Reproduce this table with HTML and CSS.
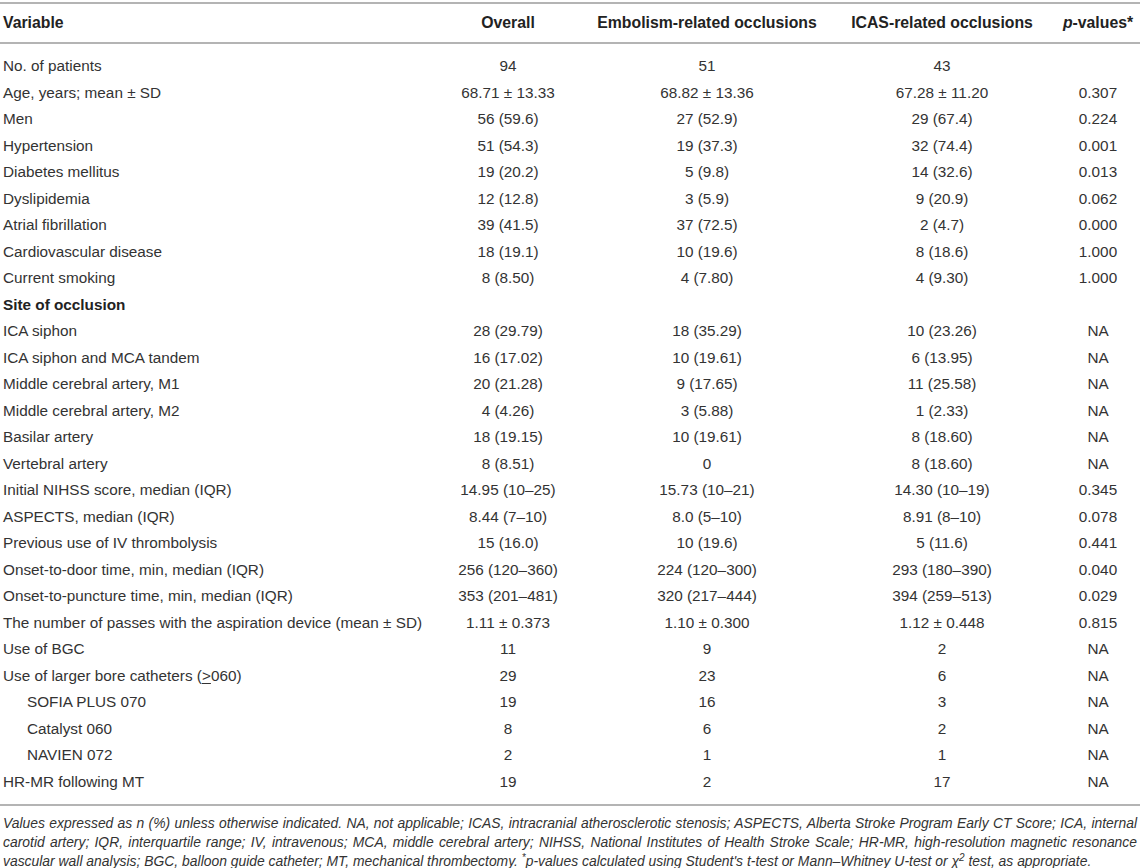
FILE: index.html
```html
<!DOCTYPE html>
<html lang="en">
<head>
<meta charset="utf-8">
<title>Table</title>
<link rel="stylesheet" href="styles.css">
</head>
<body>
<div class="wrap">
<table class="tbl">
  <colgroup>
    <col class="c-var"><col class="c-all"><col class="c-emb"><col class="c-icas"><col class="c-p">
  </colgroup>
  <thead>
    <tr><th class="left">Variable</th><th>Overall</th><th>Embolism-related occlusions</th><th>ICAS-related occlusions</th><th><i>p</i>-values*</th></tr>
  </thead>
  <tbody>
    <tr class="first"><td>No. of patients</td><td>94</td><td>51</td><td>43</td><td></td></tr>
    <tr><td>Age, years; mean ± SD</td><td>68.71 ± 13.33</td><td>68.82 ± 13.36</td><td>67.28 ± 11.20</td><td>0.307</td></tr>
    <tr><td>Men</td><td>56 (59.6)</td><td>27 (52.9)</td><td>29 (67.4)</td><td>0.224</td></tr>
    <tr><td>Hypertension</td><td>51 (54.3)</td><td>19 (37.3)</td><td>32 (74.4)</td><td>0.001</td></tr>
    <tr><td>Diabetes mellitus</td><td>19 (20.2)</td><td>5 (9.8)</td><td>14 (32.6)</td><td>0.013</td></tr>
    <tr><td>Dyslipidemia</td><td>12 (12.8)</td><td>3 (5.9)</td><td>9 (20.9)</td><td>0.062</td></tr>
    <tr><td>Atrial fibrillation</td><td>39 (41.5)</td><td>37 (72.5)</td><td>2 (4.7)</td><td>0.000</td></tr>
    <tr><td>Cardiovascular disease</td><td>18 (19.1)</td><td>10 (19.6)</td><td>8 (18.6)</td><td>1.000</td></tr>
    <tr><td>Current smoking</td><td>8 (8.50)</td><td>4 (7.80)</td><td>4 (9.30)</td><td>1.000</td></tr>
    <tr><td class="group">Site of occlusion</td><td></td><td></td><td></td><td></td></tr>
    <tr><td>ICA siphon</td><td>28 (29.79)</td><td>18 (35.29)</td><td>10 (23.26)</td><td>NA</td></tr>
    <tr><td>ICA siphon and MCA tandem</td><td>16 (17.02)</td><td>10 (19.61)</td><td>6 (13.95)</td><td>NA</td></tr>
    <tr><td>Middle cerebral artery, M1</td><td>20 (21.28)</td><td>9 (17.65)</td><td>11 (25.58)</td><td>NA</td></tr>
    <tr><td>Middle cerebral artery, M2</td><td>4 (4.26)</td><td>3 (5.88)</td><td>1 (2.33)</td><td>NA</td></tr>
    <tr><td>Basilar artery</td><td>18 (19.15)</td><td>10 (19.61)</td><td>8 (18.60)</td><td>NA</td></tr>
    <tr><td>Vertebral artery</td><td>8 (8.51)</td><td>0</td><td>8 (18.60)</td><td>NA</td></tr>
    <tr><td>Initial NIHSS score, median (IQR)</td><td>14.95 (10–25)</td><td>15.73 (10–21)</td><td>14.30 (10–19)</td><td>0.345</td></tr>
    <tr><td>ASPECTS, median (IQR)</td><td>8.44 (7–10)</td><td>8.0 (5–10)</td><td>8.91 (8–10)</td><td>0.078</td></tr>
    <tr><td>Previous use of IV thrombolysis</td><td>15 (16.0)</td><td>10 (19.6)</td><td>5 (11.6)</td><td>0.441</td></tr>
    <tr><td>Onset-to-door time, min, median (IQR)</td><td>256 (120–360)</td><td>224 (120–300)</td><td>293 (180–390)</td><td>0.040</td></tr>
    <tr><td>Onset-to-puncture time, min, median (IQR)</td><td>353 (201–481)</td><td>320 (217–444)</td><td>394 (259–513)</td><td>0.029</td></tr>
    <tr><td>The number of passes with the aspiration device (mean ± SD)</td><td>1.11 ± 0.373</td><td>1.10 ± 0.300</td><td>1.12 ± 0.448</td><td>0.815</td></tr>
    <tr><td>Use of BGC</td><td>11</td><td>9</td><td>2</td><td>NA</td></tr>
    <tr><td>Use of larger bore catheters (<u>&gt;</u>060)</td><td>29</td><td>23</td><td>6</td><td>NA</td></tr>
    <tr><td class="sub">SOFIA PLUS 070</td><td>19</td><td>16</td><td>3</td><td>NA</td></tr>
    <tr><td class="sub">Catalyst 060</td><td>8</td><td>6</td><td>2</td><td>NA</td></tr>
    <tr><td class="sub">NAVIEN 072</td><td>2</td><td>1</td><td>1</td><td>NA</td></tr>
    <tr class="last"><td>HR-MR following MT</td><td>19</td><td>2</td><td>17</td><td>NA</td></tr>
  </tbody>
</table>
<div class="foot">
  <span class="line">Values expressed as n (%) unless otherwise indicated. NA, not applicable; ICAS, intracranial atherosclerotic stenosis; ASPECTS, Alberta Stroke Program Early CT Score; ICA, internal</span>
  <span class="line">carotid artery; IQR, interquartile range; IV, intravenous; MCA, middle cerebral artery; NIHSS, National Institutes of Health Stroke Scale; HR-MR, high-resolution magnetic resonance</span>
  <span class="line final">vascular wall analysis; BGC, balloon guide catheter; MT, mechanical thrombectomy. <sup class="ast">*</sup>p-values calculated using Student's t-test or Mann–Whitney U-test or χ<sup>2</sup> test, as appropriate.</span>
</div>
</div>
</body>
</html>
```
FILE: styles.css
```css
html, body {
  margin: 0;
  padding: 0;
  background: #ffffff;
}
body {
  font-family: "Liberation Sans", Arial, sans-serif;
  color: #333333;
}
.wrap {
  width: 1140px;
  padding-top: 2px;
}
.tbl {
  width: 1140px;
  border-collapse: collapse;
  table-layout: fixed;
  font-size: 15.3px;
}
.c-var { width: 430px; }
.c-all { width: 156px; }
.c-emb { width: 242px; }
.c-icas { width: 228px; }
.c-p { width: 84px; }
.tbl thead tr {
  border-top: 2px solid #b4b4b4;
  border-bottom: 2px solid #b4b4b4;
}
.tbl th {
  font-weight: bold;
  font-size: 15.8px;
  color: #222222;
  text-align: center;
  padding: 0 3px;
  height: 38px;
  line-height: 18px;
  white-space: nowrap;
}
.tbl th.left { text-align: left; }
.tbl td {
  text-align: center;
  padding: 4px 3px;
  line-height: 18.5px;
  white-space: nowrap;
}
.tbl td:first-child { text-align: left; }
.tbl tr.first td { padding-top: 13px; }
.tbl tr.last td { padding-bottom: 13px; }
.tbl tbody tr.last { border-bottom: 2px solid #b4b4b4; }
.tbl td.group { font-weight: bold; color: #222222; }
.tbl td.sub { padding-left: 27px; }
.tbl u { text-decoration: underline; text-underline-offset: 2px; }
.foot {
  font-size: 13.9px;
  font-style: italic;
  line-height: 19px;
  padding: 8px 3px 0 3px;
  color: #333333;
}
.foot .line {
  display: block;
  text-align: justify;
  text-align-last: justify;
  white-space: nowrap;
}
.foot .line.final {
  text-align-last: left;
}
.foot sup {
  font-size: 10px;
  line-height: 0;
  vertical-align: 5px;
}
```
